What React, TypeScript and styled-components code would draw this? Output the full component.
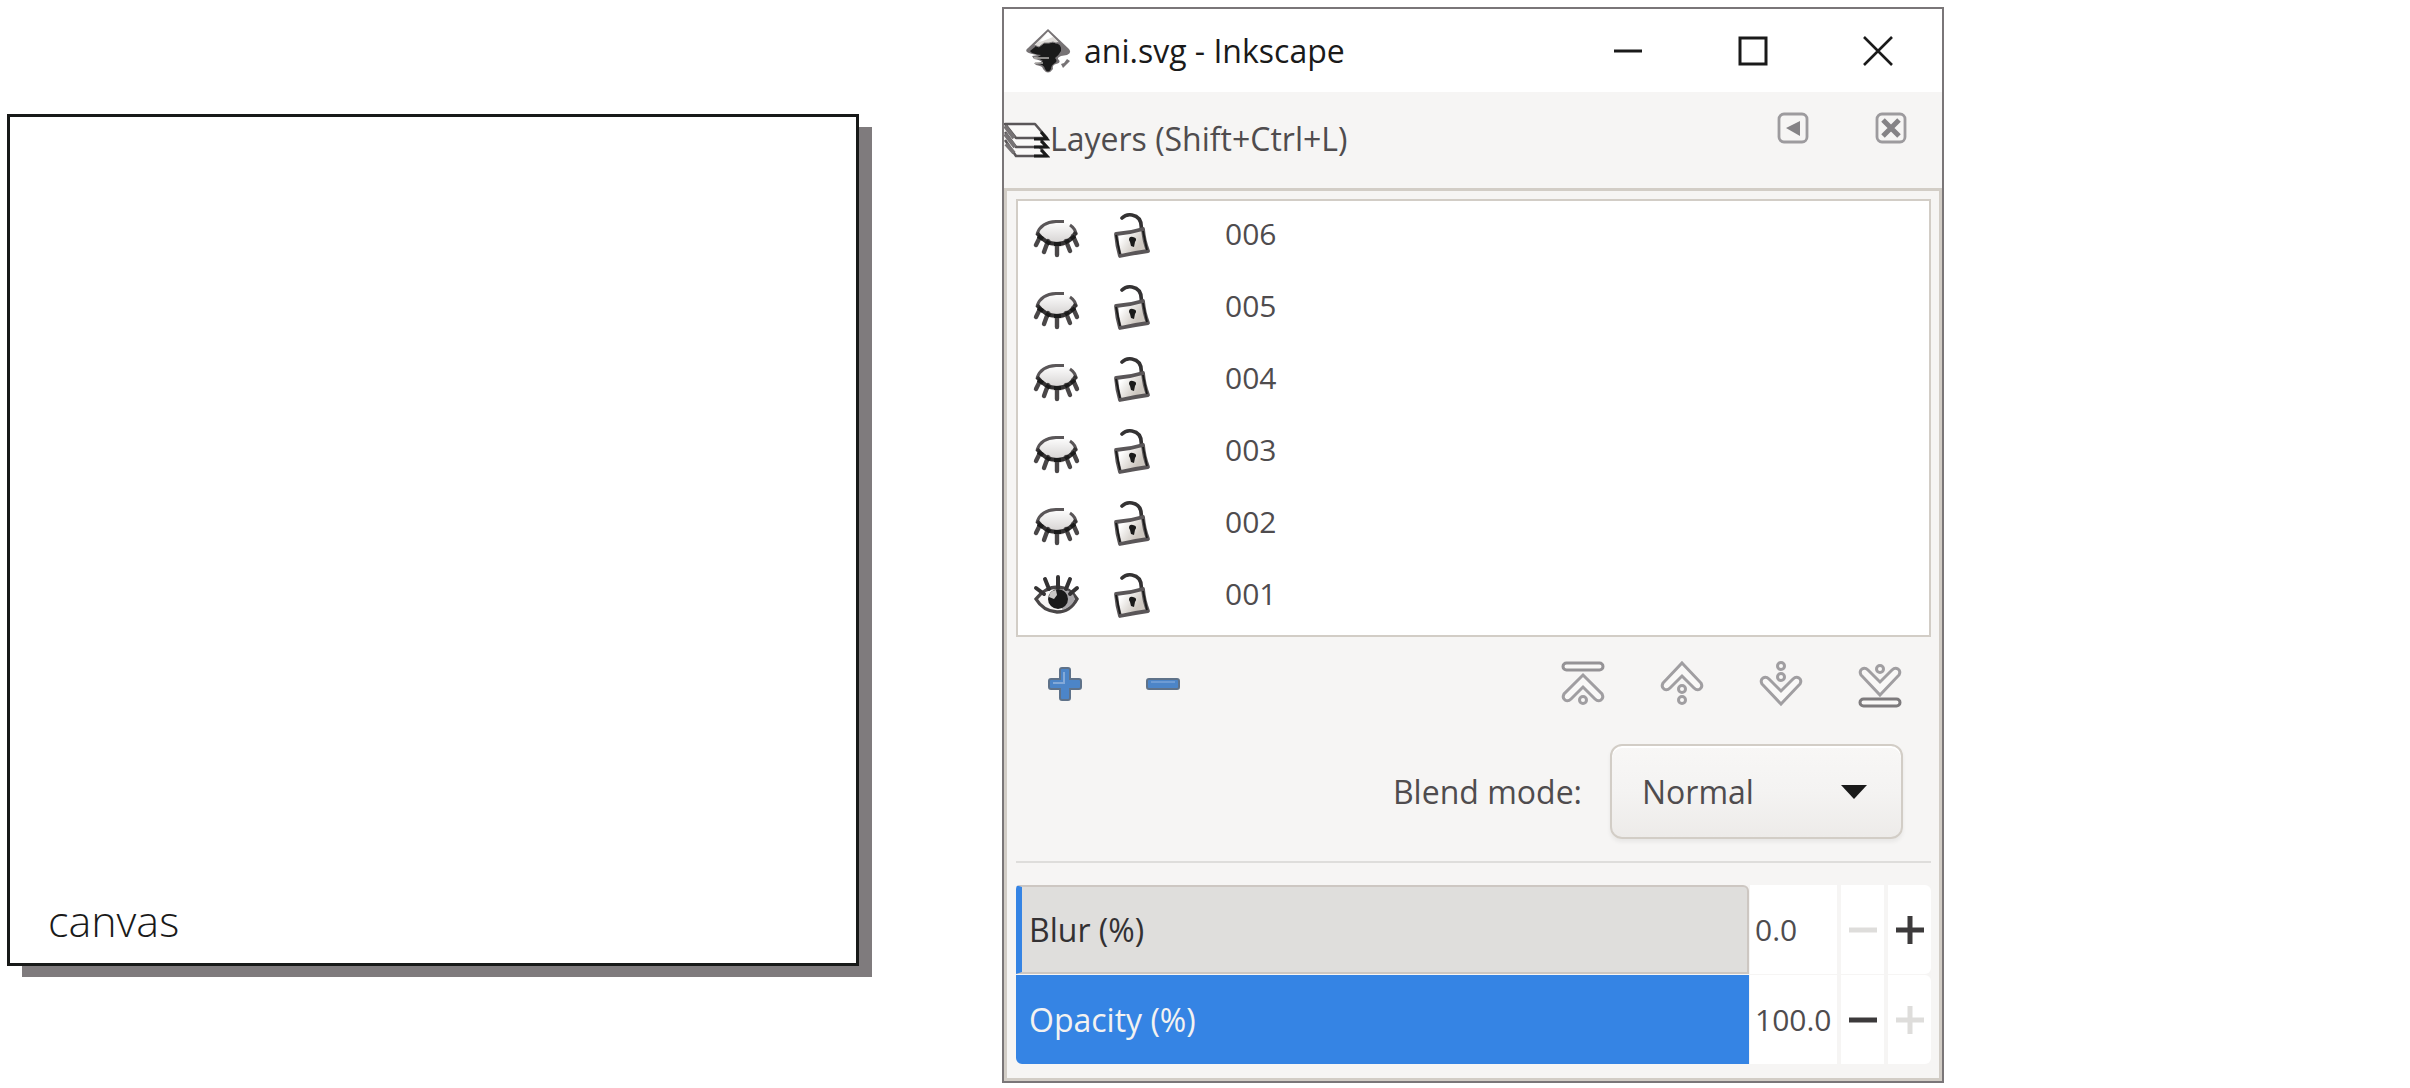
import React, { useState } from 'react';
import styled, { createGlobalStyle } from 'styled-components';

const ink = '#1a1a1a';
const textGrey = '#4f4c4e';
const edge = '#d2cdc6';
const surface = '#f6f5f4';
const accent = '#3584e4';

const GlobalStyle = createGlobalStyle`
  *, *::before, *::after { box-sizing: border-box; }
  body { margin: 0; background: #fff; font-family: "Open Sans", "Noto Sans", sans-serif; color: ${ink}; }
  button, input, select { font: inherit; color: inherit; }
`;

const Page = styled.main`
  display: grid;
  grid-template-columns: 852fr 942fr 323fr;
  column-gap: 143px;
  align-items: start;
  padding: 7px 0 0 7px;
`;

const Canvas = styled.section`
  display: flex;
  align-items: flex-end;
  aspect-ratio: 1;
  margin-top: 107px;
  padding: 0 38px 12px;
  border: 3px solid #171918;
  background: #fff;
  box-shadow: 14px 12px 0 -1px #7f7b7d;
  font-size: 43px;
  line-height: 60px;
  font-weight: 300;
`;

const AppWindow = styled.section`
  border: 2px solid #7a7678;
  background: ${surface};
`;

const TitleBar = styled.header`
  display: flex;
  align-items: center;
  height: 83px;
  padding: 0 2px 0 20px;
  background: #fff;
`;

const Title = styled.h1`
  flex: 1;
  margin: 0 0 0 12px;
  font-size: 32px;
  line-height: 40px;
  font-weight: 400;
`;

const IconButton = styled.button<{ $width: number }>`
  display: flex;
  align-items: center;
  justify-content: center;
  width: ${(p) => p.$width}px;
  height: 72px;
  padding: 0;
  border: 0;
  background: transparent;
`;

const DialogHeader = styled.div`
  display: flex;
  align-items: center;
  height: 96px;
  padding: 0 2px 2px 0;
  color: ${textGrey};
`;

const DialogTitle = styled.h2`
  flex: 1;
  margin: 0;
  font-size: 32px;
  line-height: 40px;
  font-weight: 400;
`;

const DialogButtons = styled.div`
  display: flex;
  align-self: flex-start;
`;

const Panel = styled.div`
  padding: 8px 8px 14px 9px;
  border: 3px solid ${edge};
`;

const LayerList = styled.ul`
  margin: 0;
  padding: 1px 0;
  list-style: none;
  border: 2px solid ${edge};
  background: #fff;
`;

const LayerRow = styled.li`
  display: grid;
  grid-template-columns: 80px 113px 1fr;
  align-items: center;
  height: 72px;
  padding-left: 14px;
`;

const LayerToggle = styled.button`
  display: flex;
  width: 50px;
  padding: 0;
  border: 0;
  background: transparent;
`;

const LayerName = styled.span`
  padding-bottom: 8px;
  font-size: 30px;
  line-height: 40px;
  color: ${textGrey};
`;

const Toolbar = styled.div`
  display: flex;
  align-items: center;
  height: 94px;
  padding-right: 2px;
`;

const Spacer = styled.div`
  flex: 1;
`;

const BlendRow = styled.div`
  display: flex;
  align-items: center;
  justify-content: flex-end;
  gap: 28px;
  padding: 13px 28px 22px 0;
  border-bottom: 2px solid #dedddb;
  color: ${textGrey};
  font-size: 32px;
  line-height: 40px;
`;

const SelectBox = styled.div`
  display: grid;
  align-items: center;
  width: 293px;
  > * { grid-area: 1 / 1; }
  > svg { justify-self: end; margin-right: 36px; pointer-events: none; }
`;

const Select = styled.select`
  appearance: none;
  width: 100%;
  height: 95px;
  padding: 0 30px;
  border: 2px solid ${edge};
  border-radius: 12px;
  background: linear-gradient(#f8f7f6, #f4f3f2 50%, #edebe9);
  box-shadow: inset 0 2px #fff, 0 3px 4px #0000000f;
`;

const Sliders = styled.div`
  display: grid;
  row-gap: 1px;
  padding-top: 22px;
`;

const SpinRow = styled.div`
  display: grid;
  grid-template-columns: 1fr 87px 43px 43px;
  column-gap: 4px;
  height: 89px;
  font-size: 30px;
  line-height: 40px;
`;

const Track = styled.div`
  display: grid;
  align-items: center;
  margin-right: -3px;
  font-size: 32px;
  > * { grid-area: 1 / 1; }
`;

const TrackLabel = styled.label<{ $light: boolean }>`
  z-index: 1;
  justify-self: start;
  padding-left: 13px;
  color: ${(p) => (p.$light ? '#f3f2f1' : '#333133')};
  pointer-events: none;
`;

const Range = styled.input<{ $full: boolean }>`
  appearance: none;
  width: 100%;
  height: 100%;
  margin: 0;
  border: 2px solid ${(p) => (p.$full ? accent : '#cdc7c2')};
  border-left: 6px solid ${accent};
  border-radius: ${(p) => (p.$full ? '0 0 0 6px' : '4px 6px 0 0')};
  background: ${(p) => (p.$full ? accent : '#dfdedc')};
  &::-webkit-slider-thumb { appearance: none; width: 1px; height: 80px; background: transparent; }
`;

const ValueField = styled.input`
  width: 100%;
  min-width: 0;
  padding: 0 0 0 5px;
  border: 0;
  background: #fff;
  color: ${textGrey};
`;

const StepButton = styled.button`
  display: flex;
  align-items: center;
  justify-content: center;
  padding: 0;
  border: 0;
  background: #fff;
  color: #3c3a3b;
  &:disabled { color: #dedddb; }
  &:last-child { border-radius: 0 6px 6px 0; }
`;

const Logo = () => (
  <svg width="48" height="48" viewBox="0 0 48 48" aria-hidden="true">
    <path d="M24 2 45 22Q48 26 43 28L37 29Q32 31 35 33Q37 36 32 37Q28 38 29 42Q24 49 19 42Q19 39 12 38L10 36L18 35Q16 33 10 32L8 29L14 28Q6 27 3 25Q1 23 4 21Z" fill="#777375" />
    <path d="M11 20Q13 16 18 17Q25 12 31 16Q38 17 37 24Q35 28 31 31Q34 34 31 36Q27 38 27 42Q24 47 21 42Q20 37 13 37L19 34Q17 32 12 31L17 28Q8 27 6 24Z" fill={ink} />
    <path d="M24 4 35 15Q32 17 29 15L25 16L20 16L15 20L10 18Z" fill="#dedbd8" stroke="#858183" />
    <path d="m24 5 5 5-10 4-4 1Z" fill="#fff" />
    <path d="M10 31h15M11 36h8" stroke="#b5b2b0" strokeWidth="1.5" />
    <path d="m37 37 3-1 3-4 3 2-3 3-4 4Z" fill="#777375" />
  </svg>
);

const LayersIcon = () => (
  <svg width="46" height="42" viewBox="0 0 46 42" aria-hidden="true">
    <g stroke="#5a5658" strokeWidth="2.6" strokeLinejoin="round" fill="#faf9f8">
      <path d="m1 22 11 16h31l-8-10" />
      <path d="m1 14 11 15h31l-8-10" />
      <path d="M1 6h30l12 14H12Z" />
    </g>
    <path d="m1 8 9 12M1 16l10 13M2 26l8 9" fill="none" stroke="#777375" strokeWidth="4" />
    <path d="m37 14 6 7H30M37 23l6 6H30M37 32l6 6H30" fill="none" stroke={ink} strokeWidth="3" />
  </svg>
);

const DockButtonIcon = ({ kind }: { kind: 'left' | 'close' }) => (
  <svg width="32" height="32" viewBox="0 0 32 32" aria-hidden="true">
    <rect x="2" y="2" width="28" height="28" rx="5" fill="none" stroke="#9d9b9e" strokeWidth="2.8" />
    {kind === 'left' ? (
      <path d="M9 16 23 9v15Z" fill="#858386" />
    ) : (
      <path d="m8 8 16 16M24 8 8 24" stroke="#858386" strokeWidth="5" />
    )}
  </svg>
);

const ClosedEye = () => (
  <svg width="50" height="50" viewBox="0 0 50 50" aria-hidden="true">
    <defs>
      <linearGradient id="lid" x1="0" y1="0" x2="0" y2="1">
        <stop offset="0" stopColor="#fff" />
        <stop offset="1" stopColor="#cfcccb" />
      </linearGradient>
    </defs>
    <path d="M5 21Q9 8 25 8Q42 9 44 21Q38 33 26 34Q13 34 5 21Z" fill="url(#lid)" />
    <path d="M5 21Q9 9 24 8.500h8M38 12q6 4 6 10" fill="none" stroke="#5a5658" strokeWidth="3" />
    <path d="M5 20Q13 31 25 31Q38 31 44 19" fill="none" stroke="#343233" strokeWidth="4" />
    <path d="m8 24-4 8M16 28l-4 11M25 31v11M34 28l4 10M41 23l4 9" stroke="#4a4748" strokeWidth="4.400" strokeLinecap="round" />
    <path d="m6 23 5 3M14 28l4 3M22 31h7M33 30l4-3M39 26l4-3" stroke={ink} strokeWidth="4" />
  </svg>
);

const OpenEye = () => (
  <svg width="50" height="50" viewBox="0 0 50 50" aria-hidden="true">
    <path d="M4 26Q13 14 26 14Q38 15 45 26Q38 39 25 39Q11 38 4 26Z" fill="#f6f5f4" stroke="#4a4748" strokeWidth="3.400" />
    <path d="M31 16Q41 18 43 26Q39 35 30 37Z" fill="#a9a7aa" />
    <ellipse cx="26" cy="26" rx="10" ry="10" fill={ink} />
    <path d="M17 24q0-6 7-7l1 5-3 4Z" fill="#c9c7c5" />
    <path d="m4 15 8 6M13 6l4 10M26 4v11M38 6l-4 10M45 15l-7 6" stroke="#343233" strokeWidth="4" strokeLinecap="round" />
  </svg>
);

const OpenLock = () => (
  <svg width="40" height="50" viewBox="0 0 40 50" aria-hidden="true">
    <defs>
      <linearGradient id="body" x1="0" y1="0" x2="1" y2="0.6">
        <stop offset="0.25" stopColor="#fff" />
        <stop offset="0.8" stopColor="#cdc7c0" />
      </linearGradient>
    </defs>
    <path d="M10 5Q14 1 20 2Q31 4 29 18" fill="none" stroke="#343233" strokeWidth="3.600" strokeLinecap="round" />
    <path d="M4 21Q18 20 31 16Q32 28 36 38Q22 40 8 43Q5 33 4 21Z" fill="url(#body)" stroke="#5a5658" strokeWidth="3.800" strokeLinejoin="round" />
    <path d="m31 18 4 19M4 22l4 19" stroke={ink} strokeWidth="1.800" />
    <path d="M17 27q0-4 4-3 5 1 2 5l-1 5-3-1-1-4Z" fill={ink} />
  </svg>
);

const PlusIcon = () => (
  <svg width="36" height="36" viewBox="0 0 36 36" aria-hidden="true">
    <path d="M15 2h6q2 0 2 2v9h9q2 0 2 2v6q0 2-2 2h-9v9q0 2-2 2h-6q-2 0-2-2v-9H4q-2 0-2-2v-6q0-2 2-2h9V4q0-2 2-2Z" fill="#4c85c8" stroke="#5f7289" strokeWidth="2" />
    <path d="M17 6v11H6" fill="none" stroke="#83a9d8" strokeWidth="2" />
  </svg>
);

const MinusIcon = () => (
  <svg width="36" height="36" viewBox="0 0 36 36" aria-hidden="true">
    <rect x="2" y="13" width="32" height="10" rx="2" fill="#4c85c8" stroke="#5f7289" strokeWidth="2" />
    <path d="M6 16h24" stroke="#6d9bd4" strokeWidth="2" />
  </svg>
);

type Move = 'top' | 'up' | 'down' | 'bottom';

const upChevron = 'M22 0 41 20Q43 24 40 26Q37 28 34 25L22 13 10 25Q7 28 4 26Q1 24 3 20Z';
const downChevron = 'M22 26 41 6Q43 2 40 0Q37 -2 34 1L22 13 10 1Q7 -2 4 0Q1 2 3 6Z';

const MoveIcon = ({ kind }: { kind: Move }) => (
  <svg width="44" height="48" viewBox="0 0 44 48" fill="#f9f8f7" stroke="#a09ea1" strokeWidth="3" aria-hidden="true">
    {kind === 'top' && (
      <>
        <rect x="2" y="3" width="40" height="7" rx="3.5" stroke="#959396" />
        <path d="M22 15 41 34Q43 38 40 40Q37 42 34 39L22 27 10 39Q7 42 4 40Q1 38 3 34Z" />
        <circle cx="22" cy="40" r="3.5" />
      </>
    )}
    {kind === 'up' && (
      <>
        <path d={upChevron} transform="translate(0 3)" />
        <circle cx="22" cy="29" r="3.5" />
        <circle cx="22" cy="40" r="3.5" />
      </>
    )}
    {kind === 'down' && (
      <>
        <path d={downChevron} transform="translate(0 18)" />
        <circle cx="22" cy="6" r="3.5" />
        <circle cx="22" cy="17" r="3.5" />
      </>
    )}
    {kind === 'bottom' && (
      <>
        <path d={downChevron} transform="translate(0 9)" />
        <circle cx="22" cy="9" r="3.5" />
        <rect x="2" y="39" width="40" height="7" rx="3.5" stroke="#7e7b7d" />
      </>
    )}
  </svg>
);

const StepIcon = ({ plus }: { plus?: boolean }) => (
  <svg width="28" height="28" viewBox="0 0 28 28" stroke="currentColor" strokeWidth="5" aria-hidden="true">
    <path d={plus ? 'M0 14h28M14 0v28' : 'M0 14h28'} />
  </svg>
);

const layers = ['006', '005', '004', '003', '002', '001'];
const moves: { kind: Move; label: string }[] = [
  { kind: 'top', label: 'Raise to top' },
  { kind: 'up', label: 'Raise' },
  { kind: 'down', label: 'Lower' },
  { kind: 'bottom', label: 'Lower to bottom' },
];

const SpinScale = ({ id, label, initial }: { id: string; label: string; initial: number }) => {
  const [value, setValue] = useState(initial);
  const full = value > 50;
  return (
    <SpinRow>
      <Track>
        <TrackLabel htmlFor={id} $light={full}>{label}</TrackLabel>
        <Range id={id} type="range" min={0} max={100} value={value} $full={full} onChange={(e) => setValue(Number(e.target.value))} />
      </Track>
      <ValueField aria-label={label} value={value.toFixed(1)} readOnly />
      <StepButton aria-label={`Decrease ${label}`} disabled={value <= 0} onClick={() => setValue(value - 1)}>
        <StepIcon />
      </StepButton>
      <StepButton aria-label={`Increase ${label}`} disabled={value >= 100} onClick={() => setValue(value + 1)}>
        <StepIcon plus />
      </StepButton>
    </SpinRow>
  );
};

export default function App() {
  return (
    <>
      <GlobalStyle />
      <Page>
        <Canvas>canvas</Canvas>
        <AppWindow>
          <TitleBar>
            <Logo />
            <Title>ani.svg - Inkscape</Title>
            <IconButton $width={125} aria-label="Minimize">
              <svg width="30" height="30" viewBox="0 0 30 30"><path d="M1 15h28" stroke={ink} strokeWidth="3" /></svg>
            </IconButton>
            <IconButton $width={125} aria-label="Maximize">
              <svg width="30" height="30" viewBox="0 0 30 30"><rect x="2" y="2" width="26" height="26" fill="none" stroke={ink} strokeWidth="3" /></svg>
            </IconButton>
            <IconButton $width={125} aria-label="Close">
              <svg width="30" height="30" viewBox="0 0 30 30"><path d="m1 1 28 28M29 1 1 29" stroke={ink} strokeWidth="2.6" /></svg>
            </IconButton>
          </TitleBar>
          <DialogHeader>
            <LayersIcon />
            <DialogTitle>Layers (Shift+Ctrl+L)</DialogTitle>
            <DialogButtons>
              <IconButton $width={98} aria-label="Iconify"><DockButtonIcon kind="left" /></IconButton>
              <IconButton $width={98} aria-label="Close dialog"><DockButtonIcon kind="close" /></IconButton>
            </DialogButtons>
          </DialogHeader>
          <Panel>
            <LayerList>
              {layers.map((name) => (
                <LayerRow key={name}>
                  <LayerToggle aria-label={`Visibility of ${name}`}>{name === '001' ? <OpenEye /> : <ClosedEye />}</LayerToggle>
                  <LayerToggle aria-label={`Lock ${name}`}><OpenLock /></LayerToggle>
                  <LayerName>{name}</LayerName>
                </LayerRow>
              ))}
            </LayerList>
            <Toolbar>
              <IconButton $width={98} aria-label="Add layer"><PlusIcon /></IconButton>
              <IconButton $width={98} aria-label="Remove layer"><MinusIcon /></IconButton>
              <Spacer />
              {moves.map((m) => (
                <IconButton key={m.kind} $width={99} aria-label={m.label}><MoveIcon kind={m.kind} /></IconButton>
              ))}
            </Toolbar>
            <BlendRow>
              <label htmlFor="blend">Blend mode:</label>
              <SelectBox>
                <Select id="blend" defaultValue="Normal"><option>Normal</option></Select>
                <svg width="26" height="14" viewBox="0 0 26 14" aria-hidden="true"><path d="M0 0h26L13 14Z" fill={ink} /></svg>
              </SelectBox>
            </BlendRow>
            <Sliders>
              <SpinScale id="blur" label="Blur (%)" initial={0} />
              <SpinScale id="opacity" label="Opacity (%)" initial={100} />
            </Sliders>
          </Panel>
        </AppWindow>
      </Page>
    </>
  );
}
